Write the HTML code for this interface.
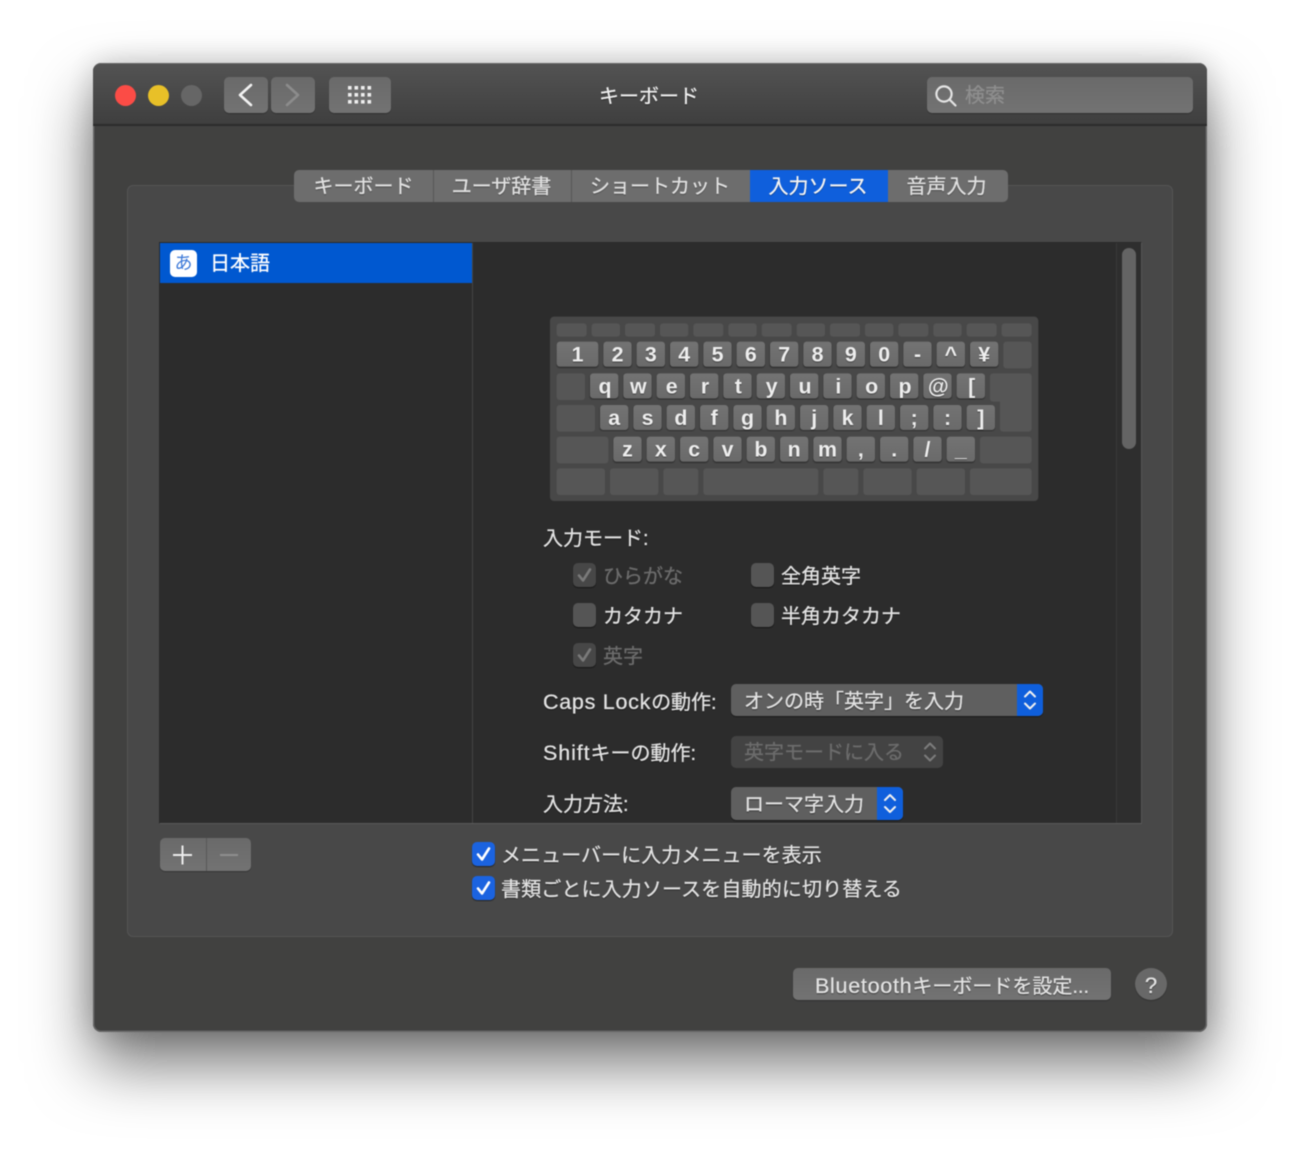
<!DOCTYPE html>
<html lang="ja"><head><meta charset="utf-8"><style>
html,body{margin:0;padding:0;background:#fff;width:1300px;height:1155px;overflow:hidden}
*{box-sizing:border-box}
#root{position:absolute;left:0;top:0;width:1300px;height:1155px;filter:blur(.55px);font-family:"Liberation Sans","Noto Sans CJK JP",sans-serif}
.a{position:absolute}
.t{position:absolute;margin-top:1.5px;line-height:20px;height:20px;font-size:20px;white-space:nowrap;color:#e2e2e2;text-shadow:0 1px 1px rgba(0,0,0,.55);-webkit-text-stroke:.3px currentColor}
.d{color:#6c6c6c;text-shadow:none}
.l{font-size:21.5px;letter-spacing:.72px}
.win{left:93px;top:63px;width:1114px;height:969px;border-radius:8px;background:#414140;box-shadow:0 32px 62px rgba(0,0,0,.55),0 0 30px rgba(0,0,0,.18),inset 0 0 0 1.5px #646464}
.title{left:93px;top:63px;width:1114px;height:63px;border-radius:8px 8px 0 0;background:linear-gradient(#535353,#3f3f3f);border-top:1.5px solid #666;border-bottom:2px solid #2b2b2b}
.btn{background:linear-gradient(#6a6a6a,#737373);border-radius:5px;box-shadow:0 1px 1px rgba(0,0,0,.25)}
.tab{position:absolute;top:170px;height:32px;line-height:35px;font-size:20px;text-align:center;color:#e0e0e0;background:#6d6d6d;text-shadow:0 1px 1px rgba(0,0,0,.4);white-space:nowrap;-webkit-text-stroke:.3px currentColor}
.cb{position:absolute;width:23px;height:24px;border-radius:5px;background:#555;box-shadow:0 1px 1px rgba(0,0,0,.5)}
.cbd{background:#474747}
.cbb{position:absolute;width:23px;height:24px;border-radius:5px;background:#1b63e0;box-shadow:0 1px 1px rgba(0,0,0,.5)}
.cb svg,.cbb svg{position:absolute;left:0;top:0}
#kb{position:absolute;left:540px;top:310px;width:1530px;height:600px;transform:scale(.33333);transform-origin:0 0}
#kb .bg{position:absolute;left:30px;top:20px;width:1465px;height:553px;background:#484848;border-radius:12px}
#kb i{position:absolute;display:block;background:#565656;border-radius:9px}
#kb b{position:absolute;display:block;background:linear-gradient(#737373,#6a6a6a);border-radius:10px;box-shadow:0 3px 3px rgba(0,0,0,.35);width:85px;height:75px;text-align:center;color:#eee;font:bold 64px/76px "Liberation Sans",sans-serif;text-shadow:0 3px 3px rgba(0,0,0,.4)}
#kb b.r{padding-left:5px}
</style></head><body><div id="root">

<div class="a win"></div>
<div class="a title"></div>

<!-- traffic lights -->
<div class="a" style="left:115px;top:85px;width:21px;height:21px;border-radius:50%;background:#fb4c46"></div>
<div class="a" style="left:148px;top:85px;width:21px;height:21px;border-radius:50%;background:#e8c028"></div>
<div class="a" style="left:181px;top:85px;width:21px;height:21px;border-radius:50%;background:#666"></div>

<!-- nav -->
<div class="a btn" style="left:224px;top:77px;width:44px;height:36px"></div>
<div class="a btn" style="left:271px;top:77px;width:44px;height:36px"></div>
<div class="a btn" style="left:329px;top:77px;width:62px;height:36px"></div>
<svg class="a" style="left:224px;top:77px" width="170" height="36" fill="none" stroke-linecap="round" stroke-linejoin="round">
<path d="M27 8 L16 18 L27 28" stroke="#f2f2f2" stroke-width="2.6"/>
<path d="M63 8 L74 18 L63 28" stroke="#8c8c8c" stroke-width="2.6"/>
<g fill="#eee" stroke="none">
<rect x="124" y="9" width="3.6" height="3.6"/><rect x="130.5" y="9" width="3.6" height="3.6"/><rect x="137" y="9" width="3.6" height="3.6"/><rect x="143.5" y="9" width="3.6" height="3.6"/>
<rect x="124" y="16" width="3.6" height="3.6"/><rect x="130.5" y="16" width="3.6" height="3.6"/><rect x="137" y="16" width="3.6" height="3.6"/><rect x="143.5" y="16" width="3.6" height="3.6"/>
<rect x="124" y="23" width="3.6" height="3.6"/><rect x="130.5" y="23" width="3.6" height="3.6"/><rect x="137" y="23" width="3.6" height="3.6"/><rect x="143.5" y="23" width="3.6" height="3.6"/>
</g></svg>

<div class="t" style="left:599px;top:85px;color:#eee">キーボード</div>

<!-- search -->
<div class="a btn" style="left:927px;top:77px;width:266px;height:36px"></div>
<svg class="a" style="left:927px;top:77px" width="36" height="36" fill="none" stroke="#e4e4e4" stroke-width="2.2" stroke-linecap="round"><circle cx="17" cy="17" r="7.6"/><path d="M22.5 22.5 L28.5 28.5"/></svg>
<div class="t" style="left:965px;top:84px;color:#8e8e8e;text-shadow:none">検索</div>

<!-- panel -->
<div class="a" style="left:127px;top:185px;width:1046px;height:752px;background:#484848;border:1.5px solid #545454;border-radius:6px"></div>

<!-- tabs -->
<div class="tab" style="left:294px;width:140px;border-radius:5px 0 0 5px;border-right:1px solid #575757">キーボード</div>
<div class="tab" style="left:434px;width:138px;border-right:1px solid #575757;text-indent:-2px">ユーザ辞書</div>
<div class="tab" style="left:572px;width:178px;text-indent:-2px">ショートカット</div>
<div class="tab" style="left:750px;width:138px;background:#0f5fdc;color:#f4f4f4;text-indent:-2px">入力ソース</div>
<div class="tab" style="left:888px;width:120px;border-radius:0 5px 5px 0;text-indent:-3px">音声入力</div>

<!-- list -->
<div class="a" style="left:159px;top:242px;width:983px;height:582px;background:#2c2c2c;border:1px solid #2a2a2a;border-right:1.5px solid #565656;border-bottom:1.5px solid #5a5a5a;overflow:hidden">
  <div class="a" style="left:312px;top:0;width:1px;height:581px;background:#444"></div>
  <div class="a" style="left:956px;top:0;width:25px;height:581px;background:#2e2e2e;border-left:1px solid #3a3a3a"></div>
  <div class="a" style="left:962px;top:5px;width:14px;height:201px;border-radius:7px;background:#646464"></div>
</div>
<div class="a" style="left:160px;top:243px;width:312px;height:40px;background:#0058d0"></div>
<div class="a" style="left:170px;top:250px;width:27px;height:27px;border-radius:5px;background:#fff"></div>
<div class="a" style="left:173px;top:253px;width:21px;line-height:21px;font-size:18px;text-align:center;color:#3b78d8">あ</div>
<div class="t" style="left:210px;top:252px;color:#fff;text-shadow:none">日本語</div>

<!-- keyboard -->
<div id="kb"><div class="bg"></div>
<i style="left:50px;top:40px;width:90px;height:40px"></i><i style="left:155px;top:40px;width:85px;height:40px"></i><i style="left:255px;top:40px;width:90px;height:40px"></i><i style="left:360px;top:40px;width:85px;height:40px"></i><i style="left:460px;top:40px;width:90px;height:40px"></i><i style="left:565px;top:40px;width:85px;height:40px"></i><i style="left:665px;top:40px;width:90px;height:40px"></i><i style="left:770px;top:40px;width:85px;height:40px"></i><i style="left:870px;top:40px;width:90px;height:40px"></i><i style="left:975px;top:40px;width:85px;height:40px"></i><i style="left:1075px;top:40px;width:90px;height:40px"></i><i style="left:1180px;top:40px;width:85px;height:40px"></i><i style="left:1280px;top:40px;width:90px;height:40px"></i><i style="left:1385px;top:40px;width:90px;height:40px"></i>
<i style="left:1390px;top:95px;width:85px;height:80px"></i>
<i style="left:50px;top:190px;width:85px;height:80px"></i>
<i style="left:1350px;top:190px;width:125px;height:85px"></i><i style="left:1380px;top:260px;width:95px;height:105px"></i>
<i style="left:50px;top:285px;width:115px;height:80px"></i>
<i style="left:50px;top:380px;width:155px;height:80px"></i><i style="left:1320px;top:380px;width:155px;height:80px"></i>
<i style="left:50px;top:475px;width:145px;height:80px"></i><i style="left:210px;top:475px;width:145px;height:80px"></i><i style="left:370px;top:475px;width:105px;height:80px"></i><i style="left:490px;top:475px;width:345px;height:80px"></i><i style="left:850px;top:475px;width:105px;height:80px"></i><i style="left:970px;top:475px;width:145px;height:80px"></i><i style="left:1130px;top:475px;width:145px;height:80px"></i><i style="left:1290px;top:475px;width:185px;height:80px"></i>

<b style="left:50px;top:95px;width:125px">1</b><b style="left:190px;top:95px">2</b><b style="left:290px;top:95px">3</b><b style="left:390px;top:95px">4</b><b style="left:490px;top:95px">5</b><b style="left:590px;top:95px">6</b><b style="left:690px;top:95px">7</b><b style="left:790px;top:95px">8</b><b style="left:890px;top:95px">9</b><b style="left:990px;top:95px">0</b><b style="left:1090px;top:95px">-</b><b style="left:1190px;top:95px">^</b><b style="left:1290px;top:95px">¥</b>
<b class="r" style="left:150px;top:190px">q</b><b class="r" style="left:250px;top:190px">w</b><b class="r" style="left:350px;top:190px">e</b><b class="r" style="left:450px;top:190px">r</b><b class="r" style="left:550px;top:190px">t</b><b class="r" style="left:650px;top:190px">y</b><b class="r" style="left:750px;top:190px">u</b><b class="r" style="left:850px;top:190px">i</b><b class="r" style="left:950px;top:190px">o</b><b class="r" style="left:1050px;top:190px">p</b><b class="r" style="left:1150px;top:190px">@</b><b class="r" style="left:1250px;top:190px">[</b>
<b style="left:180px;top:285px">a</b><b style="left:280px;top:285px">s</b><b style="left:380px;top:285px">d</b><b style="left:480px;top:285px">f</b><b style="left:580px;top:285px">g</b><b style="left:680px;top:285px">h</b><b style="left:780px;top:285px">j</b><b style="left:880px;top:285px">k</b><b style="left:980px;top:285px">l</b><b style="left:1080px;top:285px">;</b><b style="left:1180px;top:285px">:</b><b style="left:1280px;top:285px">]</b>
<b style="left:220px;top:380px">z</b><b style="left:320px;top:380px">x</b><b style="left:420px;top:380px">c</b><b style="left:520px;top:380px">v</b><b style="left:620px;top:380px">b</b><b style="left:720px;top:380px">n</b><b style="left:820px;top:380px">m</b><b style="left:920px;top:380px">,</b><b style="left:1020px;top:380px">.</b><b style="left:1120px;top:380px">/</b><b style="left:1220px;top:380px">_</b>
</div>

<!-- input modes -->
<div class="t" style="left:543px;top:527px">入力モード:</div>

<div class="cb cbd" style="left:573px;top:563px"><svg width="23" height="24" fill="none" stroke="#7a7a7a" stroke-width="2.6" stroke-linecap="round" stroke-linejoin="round"><path d="M6 12.5 L10 17.5 L17 6.5"/></svg></div>
<div class="t d" style="left:603px;top:565px">ひらがな</div>
<div class="cb" style="left:751px;top:563px"></div>
<div class="t" style="left:781px;top:565px">全角英字</div>

<div class="cb" style="left:573px;top:603px"></div>
<div class="t" style="left:603px;top:605px">カタカナ</div>
<div class="cb" style="left:751px;top:603px"></div>
<div class="t" style="left:781px;top:605px">半角カタカナ</div>

<div class="cb cbd" style="left:573px;top:643px"><svg width="23" height="24" fill="none" stroke="#7a7a7a" stroke-width="2.6" stroke-linecap="round" stroke-linejoin="round"><path d="M6 12.5 L10 17.5 L17 6.5"/></svg></div>
<div class="t d" style="left:603px;top:645px">英字</div>

<div class="t" style="left:543px;top:690px"><span class="l">Caps Lock</span>の動作:</div>
<div class="a" style="left:731px;top:684px;width:312px;height:32px;border-radius:5px;background:#5f5f5f;box-shadow:0 1px 1px rgba(0,0,0,.4);overflow:hidden"><div class="a" style="right:0;top:0;width:26px;height:32px;background:#0f5fdc"></div>
<svg class="a" style="right:0;top:0" width="26" height="32" fill="none" stroke="#f0f0f0" stroke-width="2" stroke-linecap="round" stroke-linejoin="round"><path d="M8 12.5 L13 7.5 L18 12.5 M8 19.5 L13 24.5 L18 19.5"/></svg></div>
<div class="t" style="left:744px;top:690px">オンの時「英字」を入力</div>

<div class="t" style="left:543px;top:741px"><span class="l" style="letter-spacing:.9px">Shift</span>キーの動作:</div>
<div class="a" style="left:731px;top:736px;width:212px;height:32px;border-radius:5px;background:#434343">
<svg class="a" style="right:0;top:0" width="26" height="32" fill="none" stroke="#7c7c7c" stroke-width="2" stroke-linecap="round" stroke-linejoin="round"><path d="M8 12.5 L13 7.5 L18 12.5 M8 19.5 L13 24.5 L18 19.5"/></svg></div>
<div class="t d" style="left:744px;top:741px">英字モードに入る</div>

<div class="t" style="left:543px;top:793px">入力方法:</div>
<div class="a" style="left:731px;top:787px;width:172px;height:33px;border-radius:5px;background:#5f5f5f;box-shadow:0 1px 1px rgba(0,0,0,.4);overflow:hidden"><div class="a" style="right:0;top:0;width:26px;height:33px;background:#0f5fdc"></div>
<svg class="a" style="right:0;top:0" width="26" height="33" fill="none" stroke="#f0f0f0" stroke-width="2" stroke-linecap="round" stroke-linejoin="round"><path d="M8 13 L13 8 L18 13 M8 20 L13 25 L18 20"/></svg></div>
<div class="t" style="left:744px;top:793px">ローマ字入力</div>

<!-- +/- -->
<div class="a btn" style="left:160px;top:838px;width:91px;height:33px"></div>
<div class="a" style="left:206px;top:838px;width:1px;height:33px;background:#575757"></div>
<svg class="a" style="left:160px;top:838px" width="91" height="33" stroke-linecap="butt"><path d="M13 17 H32 M22.5 7.5 V26.5" stroke="#ececec" stroke-width="2" fill="none"/><path d="M60 17 H78" stroke="#8e8e8e" stroke-width="2" fill="none"/></svg>

<!-- bottom checkboxes -->
<div class="cbb" style="left:472px;top:842px"><svg width="23" height="24" fill="none" stroke="#fff" stroke-width="2.6" stroke-linecap="round" stroke-linejoin="round"><path d="M6 12.5 L10 17.5 L17 6.5"/></svg></div>
<div class="t" style="left:501px;top:844px;letter-spacing:.06px">メニューバーに入力メニューを表示</div>
<div class="cbb" style="left:472px;top:876px"><svg width="23" height="24" fill="none" stroke="#fff" stroke-width="2.6" stroke-linecap="round" stroke-linejoin="round"><path d="M6 12.5 L10 17.5 L17 6.5"/></svg></div>
<div class="t" style="left:501px;top:878px;letter-spacing:.13px">書類ごとに入力ソースを自動的に切り替える</div>

<!-- bottom -->
<div class="a btn" style="left:793px;top:968px;width:318px;height:32px"></div>
<div class="t" style="left:815px;top:974px"><span class="l">Bluetooth</span>キーボードを設定...</div>
<div class="a" style="left:1135px;top:968px;width:32px;height:32px;border-radius:50%;background:#686868;box-shadow:0 1px 1px rgba(0,0,0,.25)"></div>
<div class="t" style="left:1135px;top:974px;width:32px;text-align:center;font-size:22px">?</div>

</div></body></html>
